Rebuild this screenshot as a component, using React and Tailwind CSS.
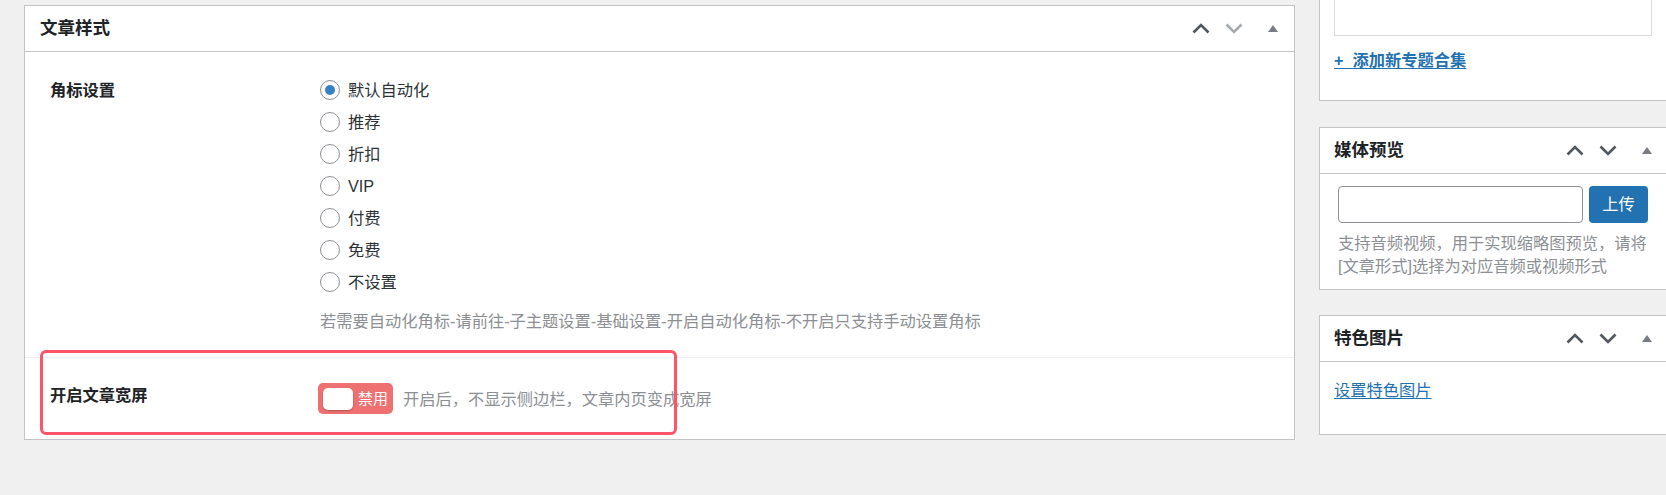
import React from 'react';

const font = "font-['Liberation_Sans','Noto_Sans_CJK_SC',sans-serif]";

const ChevronUp = ({ color }) => (
  <svg width="18" height="11" viewBox="0 0 18 11" fill="none">
    <path d="M1.5 9.5 L9 2 L16.5 9.5" stroke={color} strokeWidth="2.6" />
  </svg>
);

const ChevronDown = ({ color }) => (
  <svg width="18" height="11" viewBox="0 0 18 11" fill="none">
    <path d="M1.5 1.5 L9 9 L16.5 1.5" stroke={color} strokeWidth="2.6" />
  </svg>
);

const Triangle = () => (
  <svg width="10" height="7" viewBox="0 0 10 7">
    <path d="M5 0 L10 7 L0 7 Z" fill="#787c82" />
  </svg>
);

const HeaderControls = ({ downColor = '#50575e' }) => (
  <div className="ml-auto flex items-center h-full pr-[5px]">
    <div className="w-[33px] flex justify-center"><ChevronUp color="#50575e" /></div>
    <div className="w-[33px] flex justify-center"><ChevronDown color={downColor} /></div>
    <div className="w-[33px] ml-[6px] flex justify-center"><Triangle /></div>
  </div>
);

const radios = ['默认自动化', '推荐', '折扣', 'VIP', '付费', '免费', '不设置'];

const SidePanel = ({ title, children, className = '' }) => (
  <div className={`bg-white border border-[#c3c4c7] ${className}`}>
    <div className="h-[46px] flex items-center border-b border-[#c3c4c7] pl-[14px]">
      <h2 className="text-[17.5px] font-semibold text-[#1d2327] leading-none">{title}</h2>
      <HeaderControls />
    </div>
    {children}
  </div>
);

export default function App() {
  return (
    <div className={`min-h-[495px] bg-[#f0f0f1] flex gap-[24px] pl-[24px] overflow-hidden ${font}`}>
      {/* main column */}
      <div className="w-[1271px] shrink-0 pt-[5px]">
        <div className="relative bg-white border border-[#c3c4c7]">
          <div className="h-[46px] flex items-center border-b border-[#c3c4c7] pl-[15px]">
            <h2 className="text-[17.5px] font-semibold text-[#1d2327] leading-none">文章样式</h2>
            <HeaderControls downColor="#a7aaad" />
          </div>

          <div className="flex pl-[25px] pt-[22px] pb-[24px]">
            <div className="w-[270px] shrink-0 text-[16.25px] font-semibold text-[#1d2327] leading-[32px]">角标设置</div>
            <div>
              {radios.map((r, i) => (
                <label key={r} className="h-[32px] flex items-center gap-[8px] text-[16.25px] text-[#2c3338]">
                  <span className="w-[20px] h-[20px] rounded-full border border-[#8c8f94] flex items-center justify-center bg-white">
                    {i === 0 && <span className="w-[10px] h-[10px] rounded-full bg-[#3582c4]" />}
                  </span>
                  {r}
                </label>
              ))}
              <p className="mt-[11px] text-[16.25px] leading-[24px] text-[#8c8f94]">
                若需要自动化角标-请前往-子主题设置-基础设置-开启自动化角标-不开启只支持手动设置角标
              </p>
            </div>
          </div>

          <div className="flex pl-[25px] pt-[25px] pb-[25px] border-t border-[#f0f0f1]">
            <div className="w-[270px] shrink-0 text-[16.25px] font-semibold text-[#1d2327] leading-[24px]">开启文章宽屏</div>
            <div className="flex items-center -ml-[2px]">
              <div className="w-[75px] h-[31px] rounded-[5px] bg-[#ef7070] flex items-center pl-[5px] gap-[5px]">
                <span className="w-[30px] h-[22px] rounded-[5px] bg-white shadow-[0_1px_2px_rgba(0,0,0,0.25)]" />
                <span className="text-[15px] text-white leading-none">禁用</span>
              </div>
              <span className="ml-[10px] text-[16.25px] text-[#8c8f94] leading-[24px]">开启后，不显示侧边栏，文章内页变成宽屏</span>
            </div>
          </div>

          {/* annotation highlight */}
          <div className="absolute left-[15px] top-[344px] w-[637px] h-[85px] border-[3px] border-[#ff5468] rounded-[6px] pointer-events-none" />
        </div>
      </div>

      {/* sidebar */}
      <div className="w-[350px] shrink-0">
        <div className="h-[101px] bg-white border-x border-b border-[#c3c4c7]">
          <div className="ml-[14px] w-[318px] h-[36px] border-x border-b border-[#dcdcde]" />
          <a className="block mt-[12px] ml-[14px] text-[16.25px] leading-[24px] font-semibold text-[#2271b1] underline underline-offset-2">
            +&nbsp;&nbsp;添加新专题合集
          </a>
        </div>

        <SidePanel title="媒体预览" className="mt-[26px]">
          <div className="pl-[18px] pt-[12px] pb-[11px]">
            <div className="flex gap-[6px]">
              <div className="w-[245px] h-[37px] rounded-[4px] border border-[#8c8f94] bg-white" />
              <button className="w-[59px] h-[37px] rounded-[4px] bg-[#2271b1] text-white text-[16.25px]">上传</button>
            </div>
            <p className="mt-[9px] text-[16.25px] leading-[23px] text-[#8c8f94]">
              支持音频视频，用于实现缩略图预览，请将<br />[文章形式]选择为对应音频或视频形式
            </p>
          </div>
        </SidePanel>

        <SidePanel title="特色图片" className="mt-[25px]">
          <div className="h-[72px] pl-[14px] pt-[16px]">
            <a className="text-[16.25px] leading-[24px] text-[#2271b1] underline underline-offset-2">设置特色图片</a>
          </div>
        </SidePanel>
      </div>
    </div>
  );
}
